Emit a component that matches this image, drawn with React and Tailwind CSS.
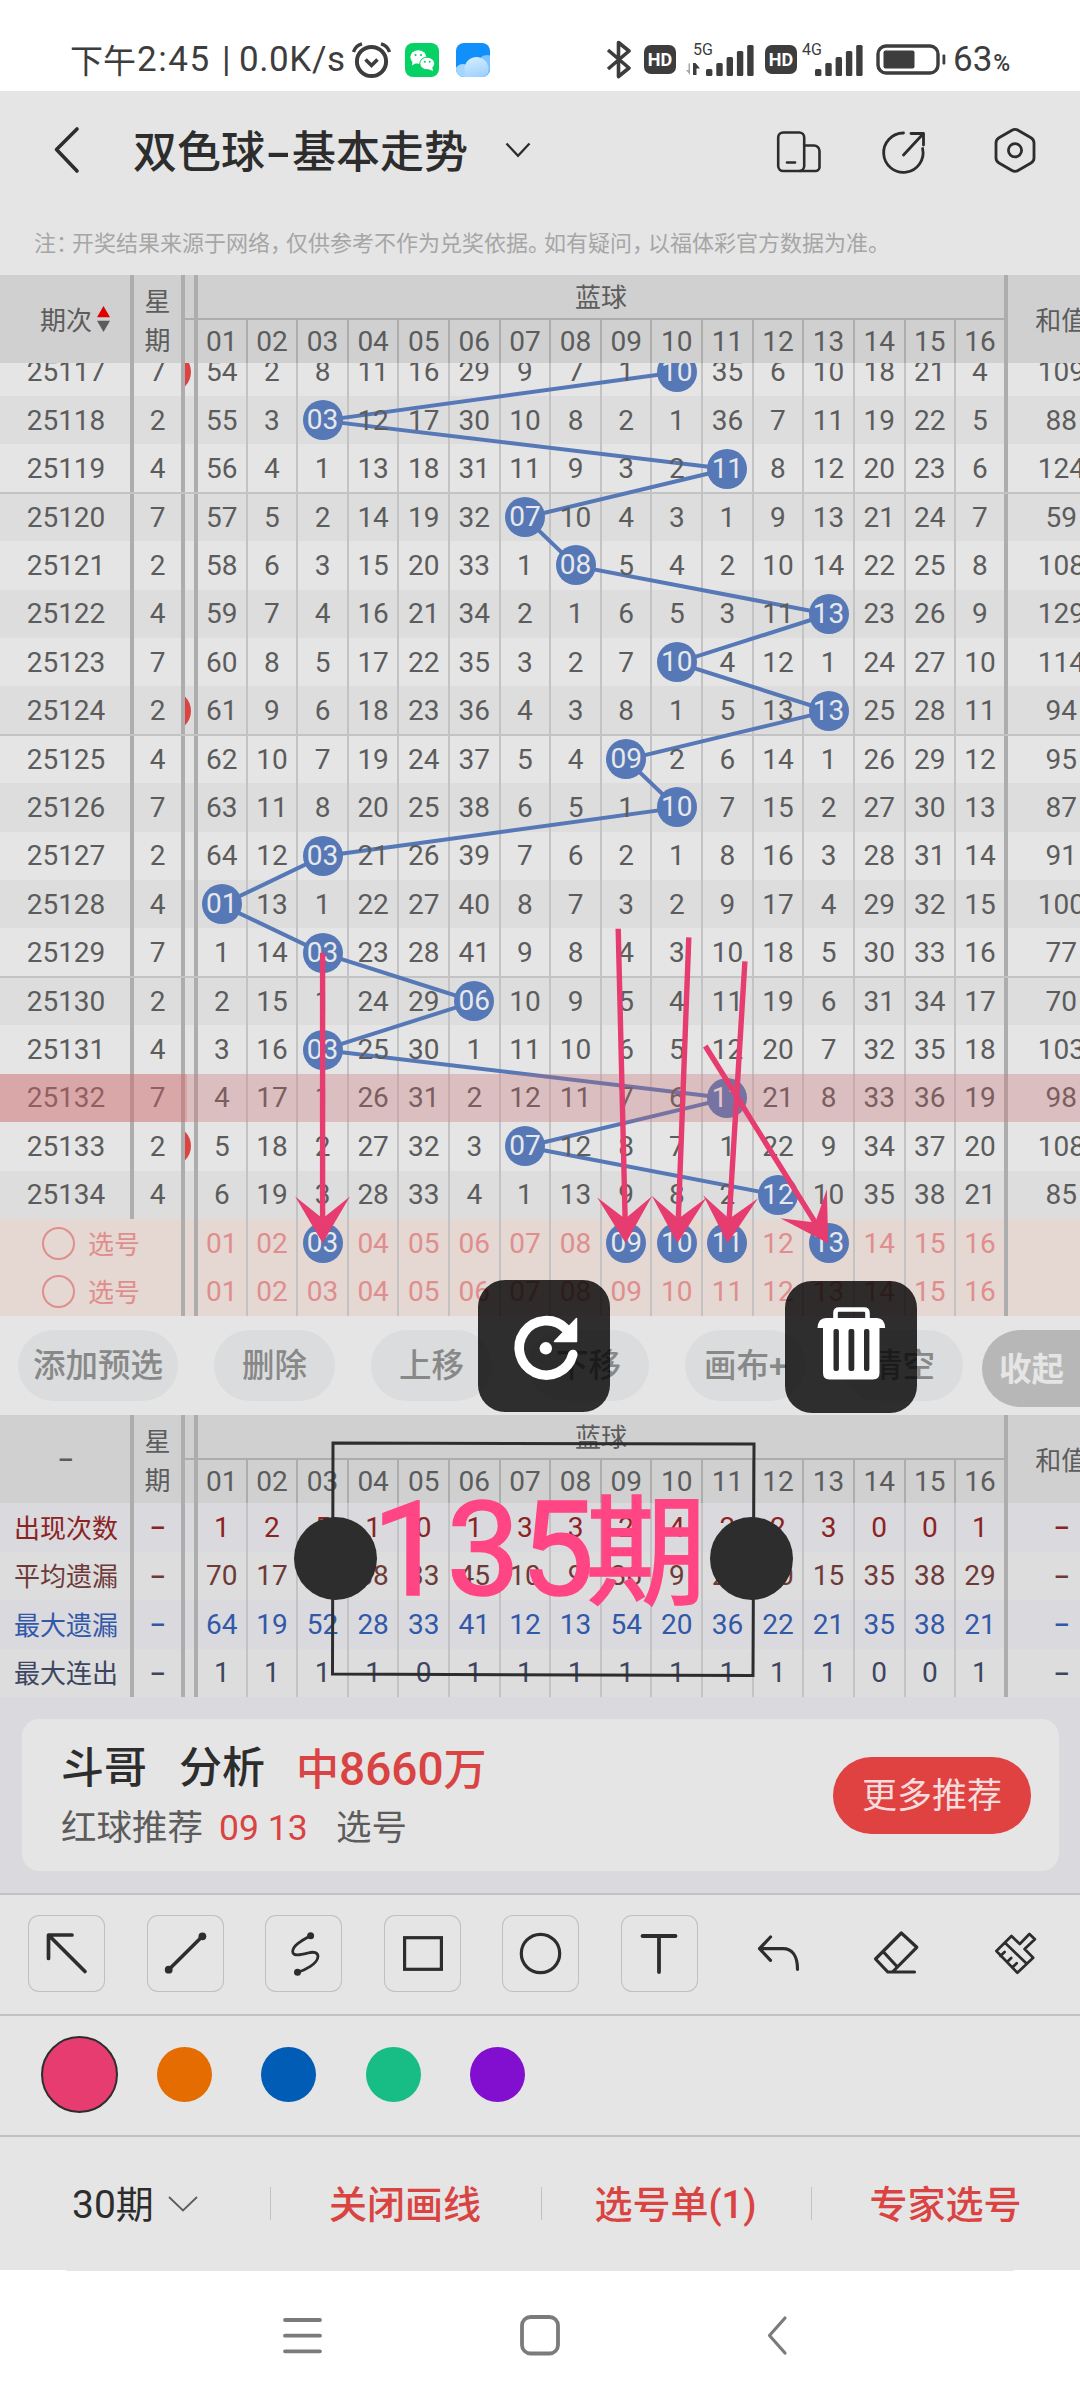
import React from "react";

const GRID =
  "grid w-[1115px] grid-cols-[134px_51px_13px_49.6px_repeat(14,50.62px)_51.7px_107px]";
const NUMS = Array.from({ length: 16 }, (_, i) => String(i + 1).padStart(2, "0"));

const HITS = [10, 3, 11, 7, 8, 13, 10, 13, 9, 10, 3, 1, 3, 6, 3, 11, 7, 12];
const SUMS = [109, 88, 124, 59, 108, 129, 114, 94, 95, 87, 91, 100, 77, 70, 103, 98, 108, 85];
const WEEK = [7, 2, 4];
const FIRST = [54, 2, 8, 11, 16, 29, 9, 7, 1, 0, 35, 6, 10, 18, 21, 4];
const RED_EDGE = [25117, 25124, 25133];
const ROW_H = 48.41;

// Each column counts the draws since its number last came up.
const ROWS = [];
let current = FIRST;
HITS.forEach((hit, i) => {
  if (i > 0) current = current.map((v) => v + 1);
  current = current.map((v, c) => (c === hit - 1 ? 0 : v));
  ROWS.push({ id: 25117 + i, week: WEEK[i % 3], hit, cells: current, sum: SUMS[i] });
});

const STATS = [
  { label: "出现次数", tone: "text-[#8c2323] bg-[#d9d9de]", v: [1, 2, 5, 1, 0, 1, 3, 3, 2, 4, 2, 2, 3, 0, 0, 1] },
  { label: "平均遗漏", tone: "text-[#6e3a38] bg-[#dddddd]", v: [70, 17, 10, 38, 33, 45, 10, 9, 36, 9, 28, 20, 15, 35, 38, 29] },
  { label: "最大遗漏", tone: "text-[#3258a8] bg-[#d9d9de]", v: [64, 19, 52, 28, 33, 41, 12, 13, 54, 20, 36, 22, 21, 35, 38, 21] },
  { label: "最大连出", tone: "text-[#3d4660] bg-[#dddddd]", v: [1, 1, 1, 1, 0, 1, 1, 1, 1, 1, 1, 1, 1, 0, 0, 1] },
];

const colX = (n) => 221.5 + 50.6 * (n - 1);
const rowY = (i) => ROW_H * (i + 0.5);

function Dash() {
  return <span className="inline-block scale-x-[1.7] font-medium">-</span>;
}

function Ball({ children }) {
  return (
    <span className="-mx-2 flex size-[40px] shrink-0 items-center justify-center rounded-full bg-[#5678b6] text-[#e8e8ea]">
      {children}
    </span>
  );
}

function Cell({ last, children }) {
  const tone = last ? "border-r-4 border-[#adadad]" : "border-r-2 border-[#c3c3c3]";
  return <div className={`flex items-center justify-center ${tone}`}>{children}</div>;
}

function TableHead({ sortable }) {
  return (
    <div className={`${GRID} h-[88px] bg-[#d0d0d0] text-[26px] leading-none text-[#5c5c5c]`}>
      <div className="flex items-center justify-center border-r-4 border-[#adadad]">
        {sortable ? (
          <div className="flex items-center gap-[5px] pl-5">
            <span className="pt-[3px]">期次</span>
            <svg className="h-[26px] w-[13px]" viewBox="0 0 13 26">
              <path d="M6.5 0L13 11.3H0Z" fill="#e00000" />
              <path d="M6.5 26L13 14.7H0Z" fill="#5c5c5c" />
            </svg>
          </div>
        ) : (
          <span className="pl-0.5 text-[28px]"><Dash /></span>
        )}
      </div>
      <div className="flex flex-col items-center justify-center gap-[13px] border-r-4 border-[#adadad] pt-1">
        <span>星</span>
        <span>期</span>
      </div>
      <div className="border-r-4 border-[#adadad]">
        <div className="h-[45px] border-b-2 border-[#adadad]" />
      </div>
      <div className="col-span-16 grid grid-cols-[49.6px_repeat(14,50.62px)_51.7px] grid-rows-[45px_43px]">
        <div className="col-span-16 flex items-center justify-center border-r-4 border-b-2 border-[#adadad] pt-[3px]">
          蓝球
        </div>
        {NUMS.map((n, i) => (
          <div
            key={n}
            className={`flex items-center justify-center border-[#adadad] text-[28px] ${i === 15 ? "border-r-4" : "border-r-2"}`}
          >
            {n}
          </div>
        ))}
      </div>
      <div className="flex items-center justify-center pt-[3px]">和值</div>
    </div>
  );
}

function TrendRow({ row }) {
  const stripe = row.id % 2 ? "bg-[#e5e5e5]" : "bg-[#dddddd]";
  const rule = row.id % 5 === 4 && row.id !== 25134;
  return (
    <div className={`${GRID} relative h-[48.41px] text-[28px] leading-none text-[#5c5c5c] ${stripe}`}>
      <div className="flex items-center justify-center border-r-4 border-[#adadad] pl-0.5 pt-px">{row.id}</div>
      <div className="flex items-center justify-center border-r-4 border-[#adadad] pt-px">{row.week}</div>
      <div className="flex items-center overflow-hidden border-r-4 border-[#adadad]">
        {RED_EDGE.includes(row.id) && (
          <span className="-ml-[34px] size-[40px] shrink-0 rounded-full bg-[#dc4342]" />
        )}
      </div>
      {row.cells.map((_, c) => (
        <Cell key={c} last={c === 15} />
      ))}
      <div className="flex items-center justify-center pt-px">{row.sum}</div>
      {rule && <div className="absolute inset-x-0 -bottom-px z-[1] h-0.5 bg-[#c3c3c3]" />}
    </div>
  );
}

function TrendBody() {
  const points = HITS.map((h, i) => `${colX(h)},${rowY(i)}`).join(" ");
  return (
    <div className="h-[856px] overflow-hidden">
      <div className="relative -mt-[15.4px]">
        {ROWS.map((r) => (
          <TrendRow key={r.id} row={r} />
        ))}
        <svg className="absolute left-0 top-0 z-[2] h-[872px] w-[1080px]" viewBox="0 0 1080 872">
          <polyline points={points} fill="none" stroke="#5678b6" strokeWidth="4" />
        </svg>
        <div className="absolute left-0 top-0 z-10">
          {ROWS.map((r) => (
            <div key={r.id} className={`${GRID} h-[48.41px] items-center text-[28px] leading-none text-[#5c5c5c]`}>
              <i /><i /><i />
              {r.cells.map((v, c) => (
                <span key={c} className={`flex justify-center ${c === 15 ? "pr-1" : "pr-0.5"}`}>
                  {c === r.hit - 1 ? <Ball>{NUMS[c]}</Ball> : <span className="pt-px">{v}</span>}
                </span>
              ))}
            </div>
          ))}
        </div>
        <div className="absolute left-0 top-[726.1px] z-20 h-[48.4px] w-[1080px] bg-[#d66469]/25" />
        <div className="absolute left-0 top-[726.1px] z-20 h-[48.4px] w-[187px] bg-[#d66469]/25" />
      </div>
    </div>
  );
}

function PickRow({ picked }) {
  return (
    <div className={`${GRID} h-[48.5px] bg-[#e5d7d2] text-[28px] leading-none text-[#e08e8d]`}>
      <div className="col-span-2 flex items-center border-r-4 border-[#adadad] pl-[42px]">
        <span className="size-[33px] rounded-full border-2 border-[#e08e8d]" />
        <span className="ml-[13px] pt-[3px] text-[26px]">选号</span>
      </div>
      <div className="border-r-4 border-[#adadad]" />
      {NUMS.map((n, i) => (
        <Cell key={n} last={i === 15}>
          {picked.includes(i + 1) ? <Ball>{n}</Ball> : <span className="pt-px">{n}</span>}
        </Cell>
      ))}
      <div />
    </div>
  );
}

function StatRow({ stat }) {
  return (
    <div className={`${GRID} h-[48.5px] text-[28px] leading-none ${stat.tone}`}>
      <div className="flex items-center justify-center border-r-4 border-[#adadad] pl-0.5 pt-[3px] text-[26px]">{stat.label}</div>
      <div className="flex items-center justify-center border-r-4 border-[#adadad]"><Dash /></div>
      <div className="border-r-4 border-[#adadad]" />
      {stat.v.map((v, i) => (
        <Cell key={i} last={i === 15}><span className="pt-px">{v}</span></Cell>
      ))}
      <div className="flex items-center justify-center"><Dash /></div>
    </div>
  );
}

function Bars() {
  return (
    <>
      <rect x="0" y="24" width="6.4" height="7" rx="1.5" />
      <rect x="10.3" y="18" width="6.4" height="13" rx="1.5" />
      <rect x="20.6" y="12" width="6.4" height="19" rx="1.5" />
      <rect x="30.9" y="6" width="6.4" height="25" rx="1.5" />
      <rect x="41.2" y="0" width="6.4" height="31" rx="1.5" />
    </>
  );
}

function HdBadge() {
  return (
    <span className="flex h-[29px] w-[32px] items-center justify-center rounded-[7px] bg-[#3d3d3d] text-[18px] font-bold leading-none text-white">
      HD
    </span>
  );
}

function StatusBar() {
  return (
    <div className="flex h-[91px] items-center bg-white pt-[28px] text-[#3d3d3d]">
      <div className="ml-[70px] flex w-[276px] items-center whitespace-nowrap text-[35px] leading-none">
        <span className="w-[67px] pt-[3px] text-[33px]">下午</span>
        <span className="w-[85px] tracking-[1.6px]">2:45</span>
        <span className="w-[17px]">|</span>
        <span className="tracking-[0.6px]">0.0K/s</span>
      </div>
      <svg className="ml-[5px] h-[38px] w-[42px]" viewBox="0 0 42 38" fill="none" stroke="#3d3d3d">
        <circle cx="20.5" cy="20.5" r="14.6" strokeWidth="4" />
        <path d="M14.5 18.5L20.5 24.5L26.5 18.5" strokeWidth="3.6" />
        <path d="M2.5 11Q4.5 4.5 11 2.8M38.5 11Q36.5 4.5 30 2.8" strokeWidth="3.4" />
      </svg>
      <svg className="ml-[12px] h-[34px] w-[34px]" viewBox="0 0 34 34">
        <rect width="34" height="34" rx="8" fill="#06d165" />
        <ellipse cx="13.3" cy="14" rx="8" ry="6.8" fill="#fff" />
        <path d="M7.5 18L7 22.5L12 19.5Z" fill="#fff" />
        <ellipse cx="22.2" cy="20.5" rx="7.4" ry="6.3" fill="#fff" stroke="#06d165" strokeWidth="1" />
        <path d="M23 26L28 28L27 23Z" fill="#fff" />
        <g fill="#06d165">
          <circle cx="10.5" cy="12" r="1.1" />
          <circle cx="16" cy="12" r="1.1" />
          <circle cx="19.8" cy="18.7" r="1" />
          <circle cx="24.6" cy="18.7" r="1" />
        </g>
      </svg>
      <svg className="ml-[17px] h-[34px] w-[34px]" viewBox="0 0 34 34">
        <defs>
          <clipPath id="sky"><rect width="34" height="34" rx="8" /></clipPath>
          <linearGradient id="cloud" x1="0" y1="0" x2="0.3" y2="1">
            <stop offset="0" stopColor="#d9efff" />
            <stop offset="1" stopColor="#9bcfff" />
          </linearGradient>
        </defs>
        <g clipPath="url(#sky)">
          <rect width="34" height="34" fill="#1190fb" />
          <circle cx="31" cy="22" r="10" fill="#7cc3ff" />
          <circle cx="7" cy="29" r="8" fill="#a5d6ff" />
          <circle cx="20.5" cy="26" r="12" fill="url(#cloud)" />
        </g>
      </svg>
      <svg className="ml-[116px] h-[39px] w-[26px]" viewBox="0 0 26 39" fill="none" stroke="#3d3d3d" strokeWidth="3.6" strokeLinejoin="round">
        <path d="M2 10L23 28L12.5 36.5V2.5L23 11L2 29" />
      </svg>
      <div className="ml-[12px]"><HdBadge /></div>
      <svg className="ml-[10px] h-[34px] w-[70px] overflow-visible" viewBox="0 0 70 34" fill="#3d3d3d">
        <text x="7" y="11.5" fontSize="16" fontFamily="Roboto">5G</text>
        <path d="M4 20.5V32L0 27H2.5V20.5Z" fill="#a8a8a8" />
        <path d="M7 20H9.5L14 25.5H10.5V32H7Z" />
        <g transform="translate(20 2)"><Bars /></g>
      </svg>
      <div className="ml-[9px]"><HdBadge /></div>
      <svg className="ml-[4px] h-[34px] w-[64px] overflow-visible" viewBox="0 0 64 34" fill="#3d3d3d">
        <text x="1" y="11.5" fontSize="16" fontFamily="Roboto">4G</text>
        <g transform="translate(14 2)"><Bars /></g>
      </svg>
      <svg className="ml-[11px] h-[31px] w-[70px]" viewBox="0 0 70 31">
        <rect x="2" y="2" width="60" height="27" rx="8" fill="none" stroke="#3d3d3d" strokeWidth="3.4" />
        <rect x="7.5" y="6.5" width="31" height="18" rx="2" fill="#3d3d3d" />
        <rect x="66.5" y="10.5" width="2.8" height="10" rx="1" fill="#3d3d3d" />
      </svg>
      <span className="ml-[7px] text-[35px] leading-none">63</span>
      <span className="ml-px mt-[8px] text-[23px] font-medium leading-none">%</span>
    </div>
  );
}

function TitleBar() {
  return (
    <div className="flex h-[118px] items-center">
      <svg className="ml-[52px] h-[48px] w-[30px]" viewBox="0 0 30 48" fill="none" stroke="#2d2d2d" strokeWidth="3.6" strokeLinecap="round" strokeLinejoin="round">
        <path d="M25 3L4.5 23.5L25 45" />
      </svg>
      <h1 className="ml-[51px] flex items-center pt-[5px] text-[44px] font-medium leading-none text-[#2d2d2d]">
        <span>双色球</span>
        <span className="flex w-[27px] justify-center"><Dash /></span>
        <span>基本走势</span>
      </h1>
      <svg className="ml-[35px] h-[16px] w-[30px]" viewBox="0 0 30 16" fill="none" stroke="#2d2d2d" strokeWidth="2.3">
        <path d="M3.5 1.5L15 13.8L26.5 1.5" />
      </svg>
      <svg className="ml-[241px] mt-[2px] h-[48px] w-[48px]" viewBox="0 0 48 48" fill="none" stroke="#2d2d2d" strokeWidth="2.6" strokeLinecap="round">
        <rect x="4.2" y="5.5" width="26" height="38.5" rx="5" />
        <path d="M30.2 18.5H40a5.5 5.5 0 0 1 5.5 5.5V40a4 4 0 0 1-4 4H26" />
        <path d="M13 35.5H21" />
      </svg>
      <svg className="ml-[58px] mt-[2px] h-[48px] w-[48px]" viewBox="0 0 48 48" fill="none" stroke="#2d2d2d" strokeWidth="2.8" strokeLinecap="round">
        <path d="M23.5 6A19.7 19.7 0 1 0 42.6 21.5" />
        <path d="M23.5 28L43 7M31 6.5H43.5V18" strokeLinejoin="round" />
      </svg>
      <svg className="ml-[63px] h-[48px] w-[48px]" viewBox="0 0 48 48" fill="none" stroke="#2d2d2d" strokeWidth="2.8">
        <path d="M21 4.2Q24 2.5 27 4.2L40 11.8Q43 13.5 43 17V32Q43 35.3 40 37L27 44.5Q24 46.3 21 44.5L8 37Q5 35.3 5 32V17Q5 13.5 8 11.8Z" />
        <circle cx="24" cy="24.3" r="6.6" />
      </svg>
    </div>
  );
}

const NOTE = "注：开奖结果来源于网络，仅供参考不作为兑奖依据。如有疑问，以福体彩官方数据为准。";

function Note() {
  return (
    <p className="flex h-[66px] items-center whitespace-nowrap pl-[34px] pt-[4px] text-[22px] leading-none text-[#a6a6a6]">
      {NOTE.split(/([：，。])/).filter(Boolean).map((part, i) => (
        <span key={i} className={/[：，。]/.test(part) ? "w-[16px]" : ""}>{part}</span>
      ))}
    </p>
  );
}

function Actions() {
  return (
    <div className="flex h-[99px] items-start gap-[36px] overflow-hidden bg-[#e5e5e5] pl-[18px] pt-[14px] text-[32.5px] font-medium leading-none text-[#888888]">
      <button className="h-[71px] w-[160px] shrink-0 rounded-full bg-[#dadcdd] pt-[2px]">添加预选</button>
      {["删除", "上移", "下移", "画布+", "清空"].map((t) => (
        <button key={t} className="h-[71px] w-[121px] shrink-0 rounded-full bg-[#dadcdd] pt-[2px]">{t}</button>
      ))}
      <button className="-ml-[17px] h-[77px] w-[120px] shrink-0 rounded-l-full bg-[#b7b7b7] pl-[17px] pt-[3px] text-left font-bold text-[#e5e5e5]">收起</button>
    </div>
  );
}

function Promo() {
  return (
    <div className="h-[196px] bg-[#d9d9de] px-[22px] pt-[22px]">
      <div className="flex h-[152px] w-[1037px] items-center rounded-[17px] bg-[#e5e5e5] pl-[39px] pr-[28px]">
        <div className="flex-1 pt-[2px]">
          <div className="flex items-center text-[43px] font-medium leading-none text-[#2d2d2d]">
            <span className="w-[118px]">斗哥</span>
            <span className="w-[117px]">分析</span>
            <span className="text-[#d94341]">中<span className="text-[46px]">8660</span>万</span>
          </div>
          <div className="mt-[19px] flex items-center text-[35.5px] leading-none text-[#5c5c5c]">
            <span className="w-[158px]">红球推荐</span>
            <span className="w-[117px] text-[#d94341]">09 13</span>
            <span>选号</span>
          </div>
        </div>
        <button className="h-[77px] w-[198px] rounded-full bg-[#e04141] pt-[2px] text-[35px] leading-none text-[#f5dcdc]">更多推荐</button>
      </div>
    </div>
  );
}

function Tool({ boxed, children }) {
  return (
    <span className={`size-[77px] rounded-[11px] ${boxed ? "shadow-[inset_0_0_0_1px_#c0c0c0]" : ""}`}>
      <svg className="size-[77px]" viewBox="0 0 77 77" fill="none" stroke="#2d2d2d" strokeWidth="3.2" strokeLinecap="round" strokeLinejoin="round">
        {children}
      </svg>
    </span>
  );
}

function Tools() {
  return (
    <div className="flex h-[121px] items-center gap-[41.6px] border-t-2 border-[#c2c2c2] pb-[2px] pl-[28px]">
      <Tool boxed>
        <path d="M44 20H20.5V43.5M21 20.5L57 56.5" strokeWidth="3.7" />
      </Tool>
      <Tool boxed>
        <path d="M21.7 54.7L55.4 21.3" strokeWidth="3.6" />
        <g fill="#2d2d2d" stroke="none"><circle cx="21.7" cy="54.7" r="3.9" /><circle cx="55.4" cy="21.3" r="3.9" /></g>
      </Tool>
      <Tool boxed>
        <path d="M45.6 20.7C38 25 28 30 27.7 36.5C27.7 42 37 39.5 43 38C49 36.3 53 37.5 53 41.5C52.5 49 40 55 32.5 57.3" strokeWidth="2.8" />
        <g fill="#2d2d2d" stroke="none"><circle cx="45.6" cy="20.7" r="3.5" /><circle cx="32.5" cy="57.3" r="3.5" /></g>
      </Tool>
      <Tool boxed>
        <rect x="20.6" y="22.7" width="36.8" height="31.6" strokeLinejoin="miter" />
      </Tool>
      <Tool boxed>
        <circle cx="38.5" cy="38.5" r="19.2" />
      </Tool>
      <Tool boxed>
        <path d="M21.5 21H54.5M38 21V57" strokeWidth="3.8" />
      </Tool>
      <Tool>
        <path d="M30.5 22L19.5 33.7L30.5 45.3M19.5 33.7H43C52 33.7 57.5 41 57.5 54.3" />
      </Tool>
      <Tool>
        <path d="M43.3 18L58.8 32.3L34.5 57H29.8L17.5 44ZM25.5 37L39 51.5M29.8 57H56.5" />
      </Tool>
      <Tool>
        <path d="M19.4 36L34.5 21L42.8 29L52.4 19L57.9 24.3L47.6 34L56.2 42.7L40.4 57.7ZM28 27.7L49 48M23.5 41L27.6 37M30 47L34.2 43M35.6 52.3L39.7 48.3" strokeWidth="2.7" />
      </Tool>
    </div>
  );
}

function Palette() {
  return (
    <div className="flex h-[121px] items-center border-t-2 border-[#c2c2c2] pb-[2px] pl-[41px]">
      <span className="mr-[39px] size-[77px] rounded-full border-2 border-[#2d2d2d] bg-[#e63c70]" />
      <div className="flex gap-[49.3px]">
        <span className="size-[55px] rounded-full bg-[#e56c00]" />
        <span className="size-[55px] rounded-full bg-[#005cb5]" />
        <span className="size-[55px] rounded-full bg-[#17bd84]" />
        <span className="size-[55px] rounded-full bg-[#820ed0]" />
      </div>
    </div>
  );
}

function BottomBar() {
  return (
    <div className="grid h-[135px] grid-cols-[270px_271px_270px_270px] items-center border-t-2 border-[#c2c2c2] text-center text-[38px] font-medium leading-none text-[#d94341]">
      <div className="flex items-center pl-[72px] font-normal text-[#2d2d2d]">
        <span className="pt-[3px]"><span className="text-[39px]">30</span>期</span>
        <svg className="ml-[13px] h-[16px] w-[32px]" viewBox="0 0 32 16" fill="none" stroke="#5c5c5c" strokeWidth="1.8">
          <path d="M2 1L16 14.5L30 1" />
        </svg>
      </div>
      {["关闭画线", "选号单(1)", "专家选号"].map((t) => (
        <div key={t} className="flex items-center">
          <span className="h-[33px] w-px bg-[#c2c2c2]" />
          <span className="flex-1 pr-[2px] pt-[3px]">{t}</span>
        </div>
      ))}
    </div>
  );
}

function NavBar() {
  return (
    <div className="flex h-[130px] flex-col items-center bg-white">
      <div className="h-px w-[948px] bg-[#e5e5e5]" />
      <svg className="mt-[39px] h-[50px] w-[520px]" viewBox="0 0 520 50" fill="none" stroke="#7b7b7b" strokeWidth="3.8" strokeLinecap="round" strokeLinejoin="round">
        <path d="M5 10H40M5 25.7H40M5 41.3H40" />
        <rect x="242" y="7" width="36" height="36.5" rx="8.5" />
        <path d="M505 8L489.5 25.5L505 43" strokeWidth="3.2" />
      </svg>
    </div>
  );
}

const ARROWS = [
  [322.6, 952.8, 322.6, 1243],
  [618.2, 928.7, 625.7, 1243.3],
  [688.8, 937.3, 677.4, 1243.3],
  [744.9, 961.3, 727.7, 1243.3],
  [705.3, 1046, 828.2, 1243.3],
];

function Drawings() {
  return (
    <svg className="pointer-events-none absolute left-0 top-0 z-30 h-[1300px] w-[1080px]" viewBox="0 0 1080 1300" fill="#e63c70">
      {ARROWS.map(([x1, y1, x2, y2], i) => {
        const len = Math.hypot(x2 - x1, y2 - y1);
        const deg = (Math.atan2(x1 - x2, y2 - y1) * 180) / Math.PI;
        return (
          <g key={i} transform={`translate(${x2} ${y2}) rotate(${deg})`}>
            <rect x="-2.7" y={-len} width="5.4" height={len - 20} />
            <path d="M0 0L-27.4 -46.5L0 -24.5L27.4 -46.5Z" />
          </g>
        );
      })}
    </svg>
  );
}

function TextObject() {
  return (
    <div className="absolute left-[294px] top-[1441px] z-30 h-[236px] w-[500px]">
      <svg className="absolute inset-0 h-[236px] w-[500px]" viewBox="0 0 500 236">
        <path d="M39 2L460 3L459 234.5L38.5 233Z" fill="none" stroke="#2d2d2d" strokeWidth="3" />
      </svg>
      <div className="absolute left-[78px] top-[43px] flex items-center whitespace-nowrap leading-none text-[#ff4583] [-webkit-text-stroke:1.5px_#ff4583]">
        <span className="text-[132px]">135</span>
        <span className="-ml-[9px] pt-[9px] text-[121px]">期</span>
      </div>
      <span className="absolute left-0 top-[76px] size-[83px] rounded-full bg-[#2d2d2d]" />
      <span className="absolute left-[416px] top-[76px] size-[83px] rounded-full bg-[#2d2d2d]" />
    </div>
  );
}

function FloatingButtons() {
  return (
    <>
      <div className="absolute left-[478px] top-[1279.5px] z-40 size-[132px] rounded-[27px] bg-black/80">
        <svg className="size-[132px]" viewBox="0 0 132 132">
          <path d="M88 49A27.2 27.2 0 1 0 94.8 74.5" fill="none" stroke="#fff" strokeWidth="9.6" strokeLinecap="round" />
          <path d="M98.5 38.5V61.5H76.5Z" fill="#fff" stroke="#fff" strokeWidth="1.5" strokeLinejoin="round" />
          <circle cx="67.8" cy="68.3" r="6.2" fill="#fff" />
        </svg>
      </div>
      <div className="absolute left-[784.5px] top-[1280.5px] z-40 size-[132px] rounded-[27px] bg-black/80">
        <svg className="size-[132px]" viewBox="0 0 132 132">
          <path d="M50.5 39V32Q50.5 28.5 54 28.5H79Q82.5 28.5 82.5 32V39" fill="none" stroke="#fff" strokeWidth="4.6" />
          <path d="M32.5 47Q33 37 41 37H92Q99.5 37 100.2 47H94.5V92Q94.5 98.5 88 98.5H44.5Q38 98.5 38 92V47Z" fill="#fff" />
          <g fill="#2b2b2b">
            <rect x="48.5" y="48" width="5.4" height="42" rx="2" />
            <rect x="63.5" y="48" width="5.8" height="42" rx="2" />
            <rect x="79" y="48" width="5.4" height="42" rx="2" />
          </g>
        </svg>
      </div>
    </>
  );
}

export default function App() {
  return (
    <div className="relative h-[2400px] w-[1080px] overflow-hidden bg-[#e5e5e5] font-[Roboto,'Noto_Sans_CJK_SC',sans-serif]">
      <StatusBar />
      <TitleBar />
      <Note />
      <TableHead sortable />
      <TrendBody />
      <PickRow picked={[3, 9, 10, 11, 13]} />
      <PickRow picked={[]} />
      <Actions />
      <TableHead />
      {STATS.map((s) => (
        <StatRow key={s.label} stat={s} />
      ))}
      <Promo />
      <Tools />
      <Palette />
      <BottomBar />
      <NavBar />
      <Drawings />
      <TextObject />
      <FloatingButtons />
    </div>
  );
}
